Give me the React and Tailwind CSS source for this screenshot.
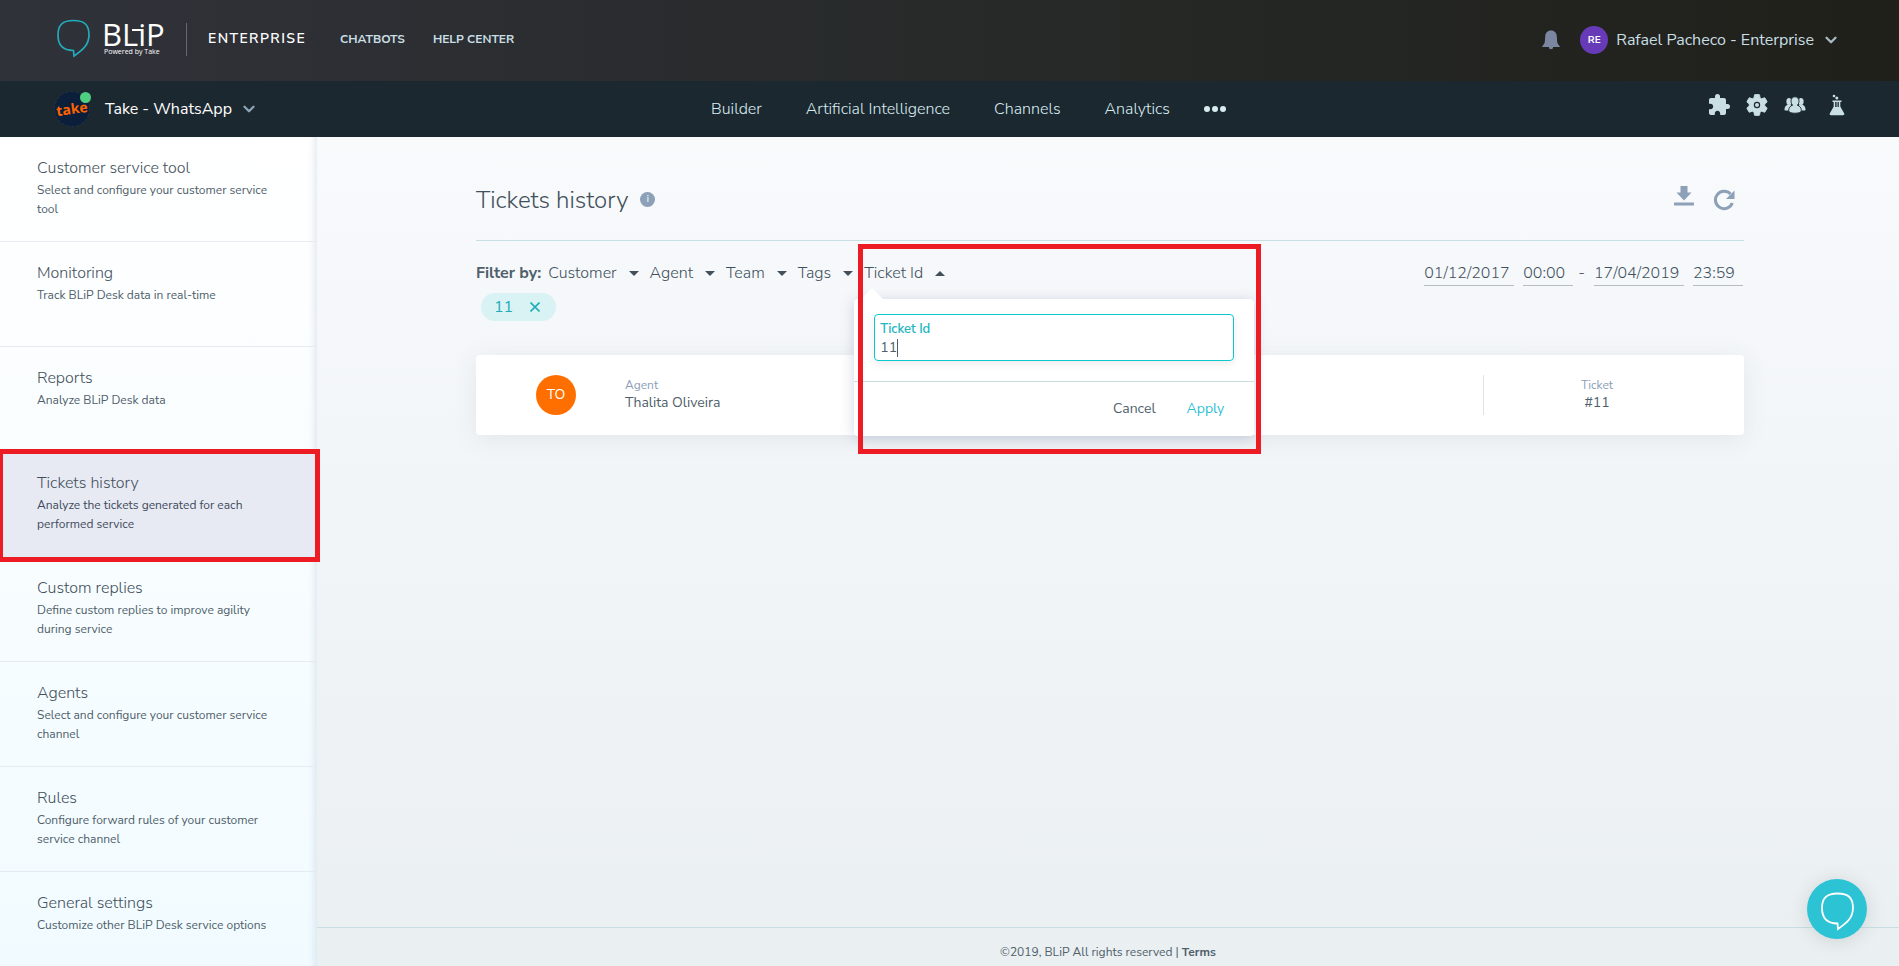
import { FiChevronDown } from "react-icons/fi";
import { MdExtension } from "react-icons/md";

const sections = [
  ["Customer service tool", "Select and configure your customer service tool"],
  ["Monitoring", "Track BLiP Desk data in real-time"],
  ["Reports", "Analyze BLiP Desk data"],
  ["Tickets history", "Analyze the tickets generated for each performed service"],
  ["Custom replies", "Define custom replies to improve agility during service"],
  ["Agents", "Select and configure your customer service channel"],
  ["Rules", "Configure forward rules of your customer service channel"],
  ["General settings", "Customize other BLiP Desk service options"],
];

const bubblePath =
  "M17 1.500C6 1.500 1.500 6 1.500 16c0 10.500 5 15.500 15.500 15.500l.5 5.500C26 31 32.500 26 32.500 16 32.500 6 28 1.500 17 1.500z";

function Bubble({ className, strokeWidth }) {
  return (
    <svg viewBox="0 0 34 40" className={className} fill="none" stroke="currentColor" strokeWidth={strokeWidth} strokeLinejoin="miter">
      <path d={bubblePath} />
    </svg>
  );
}

function Wordmark() {
  return (
    <span className="relative block w-[64px] font-['Open_Sans',sans-serif] text-white">
      <span className="-ml-0.5 block text-[31px] leading-[26px]">BLiP</span>
      <span className="block text-[7px] leading-[10px] whitespace-nowrap">Powered by Take</span>
      <span className="absolute left-7 top-2 h-0.5 w-2.5 bg-white" />
    </span>
  );
}

function BotLogo() {
  return (
    <span className="relative block size-9">
      <svg viewBox="0 0 36 36" className="size-9" role="img" aria-label="take">
        <circle cx="18" cy="18" r="17.500" fill="#0c1f3a" stroke="#2c3d52" strokeWidth="0.6" strokeDasharray="3 2" />
        <text x="18" y="23" fontSize="14" fontWeight="700" fill="#ff6400" fontFamily='"Open Sans", sans-serif' transform="rotate(-8 18 18)" textAnchor="middle">
          take
        </text>
      </svg>
      <span className="absolute -right-px top-px size-[11px] rounded-full bg-[#4fd080]" />
    </span>
  );
}

function BellIcon() {
  return (
    <svg viewBox="0 0 18 20" className="h-5 w-[18px]" fill="currentColor">
      <path d="M9 .5C5.300.5 3.400 3 3.200 6.200L2.900 11c-.1 2-1 3.600-2.700 5.200v.8h6.600a2.200 2.200 0 0 0 4.400 0h6.600v-.8c-1.700-1.600-2.600-3.200-2.700-5.200l-.3-4.800C14.600 3 12.700.5 9 .5z" />
    </svg>
  );
}

function GearIcon() {
  return (
    <svg viewBox="0 0 24 24" className="size-[26px]" fill="currentColor">
      <path d="M19.140 12.940c.04-.3.06-.61.06-.94 0-.32-.02-.64-.07-.94l2.030-1.580c.18-.14.23-.41.12-.61l-1.920-3.320c-.12-.22-.37-.29-.59-.22l-2.390.96c-.5-.38-1.030-.7-1.620-.94l-.36-2.540c-.04-.24-.24-.41-.48-.41h-3.840c-.24 0-.43.17-.47.41l-.36 2.540c-.59.24-1.130.57-1.620.94l-2.390-.96c-.22-.08-.47 0-.59.22L2.740 8.870c-.12.21-.08.47.12.61l2.030 1.580c-.05.3-.09.63-.09.94s.02.64.07.94l-2.030 1.580c-.18.14-.23.41-.12.61l1.920 3.320c.12.22.37.29.59.22l2.390-.96c.5.38 1.030.7 1.620.94l.36 2.540c.05.24.24.41.48.41h3.840c.24 0 .44-.17.47-.41l.36-2.540c.59-.24 1.130-.56 1.620-.94l2.390.96c.22.08.47 0 .59-.22l1.920-3.320c.12-.22.07-.47-.12-.61l-2.010-1.580z" stroke="currentColor" strokeWidth="0.8" />
      <circle cx="12" cy="12" r="2.400" fill="none" stroke="#1c2830" strokeWidth="1.100" />
    </svg>
  );
}

function PeopleIcon() {
  return (
    <svg viewBox="0 0 22 18" className="h-[18px] w-[22px]" fill="currentColor">
      <ellipse cx="5" cy="5.500" rx="2.600" ry="3.500" />
      <ellipse cx="17" cy="5.500" rx="2.600" ry="3.500" />
      <path d="M.5 13.500C.5 10.500 2 9.500 4 8.500h3v6H1.500c-.7 0-1-.4-1-1zM21.500 13.500c0-3-1.500-4-3.500-5h-3v6h5.500c.7 0 1-.4 1-1z" />
      <path
        d="M11 .8c2.500 0 4 1.800 4 4.200 0 1.900-.7 3.300-1.700 4.200 2.600.8 4 2.500 4 5.300 0 1.900-3 2.700-6.300 2.700s-6.300-.8-6.300-2.700c0-2.800 1.400-4.500 4-5.300C7.700 8.300 7 6.900 7 5 7 2.600 8.500.8 11 .8z"
        stroke="#1c2830"
        strokeWidth="0.9"
      />
    </svg>
  );
}

function FlaskIcon() {
  return (
    <svg viewBox="0 0 16 22" className="h-[22px] w-4" fill="currentColor">
      <circle cx="5" cy="2" r="1.300" />
      <circle cx="7.800" cy="4" r="1.500" />
      <path d="M3.500 6.500h9V8h-1.200v4.500l3.800 6.800c.6 1.100 0 2-1.200 2H2.100c-1.200 0-1.800-.9-1.200-2l3.800-6.800V8H3.500z" />
      <path d="M6.200 8h3.600v5H6.200z" fill="#1c2830" />
      <path d="M7.600 8h.9v5h-.9z" />
    </svg>
  );
}

function DownloadIcon() {
  return (
    <svg viewBox="0 0 22 22" className="size-[22px]" fill="currentColor">
      <path d="M7.500 1h7v6.500h4L11 15.500 3.500 7.500h4z" />
      <rect x="1" y="17.500" width="20" height="3" rx="0.5" />
    </svg>
  );
}

function RefreshIcon() {
  return (
    <svg viewBox="0 0 22 22" className="size-[22px]" fill="none" stroke="currentColor" strokeWidth="3">
      <path d="M19.300 14A8.700 8.700 0 1 1 17.500 5" />
      <path d="M21.500 1.500v8.500h-8.500z" fill="currentColor" stroke="none" />
    </svg>
  );
}

function Caret({ up }) {
  return (
    <svg viewBox="0 0 10 5" className={up ? "h-[5px] w-[10px] rotate-180" : "h-[5px] w-[10px]"} fill="currentColor">
      <path d="M0 0h10L5 5z" />
    </svg>
  );
}

function FilterButton({ children, up }) {
  return (
    <button type="button" aria-expanded={!!up} className="flex items-center gap-3 font-light text-[#42505c]">
      {children}
      <Caret up={up} />
    </button>
  );
}

function TicketPopup() {
  return (
    <form className="absolute -left-[10px] top-[38px] z-10 w-[400px] rounded-sm bg-white shadow-[0_2px_14px_rgba(80,100,150,0.25)]">
      <svg viewBox="0 0 22 11" className="absolute -top-[11px] left-[7px] h-[11px] w-[22px]" fill="#fff">
        <path d="M11 0l11 11H0z" />
      </svg>
      <div className="border-b border-[#c7dfe3] px-5 pb-5 pt-[15px]">
        <div className="h-[47px] rounded border border-[#0cc8cc] px-[5px] pt-1 shadow-[0_3px_10px_rgba(0,0,0,0.08)]">
          <label htmlFor="ticket-id" className="block text-[13px] leading-5 font-semibold text-[#21b5bf]">
            Ticket Id
          </label>
          <div className="flex items-center">
            <input id="ticket-id" defaultValue="11" className="field-sizing-content h-[18px] text-sm leading-[18px] caret-transparent outline-none" />
            <span className="h-[18px] w-px bg-[#505f6b]" />
          </div>
        </div>
      </div>
      <div className="flex h-[54px] items-center justify-end gap-[31px] pr-[30px] text-sm">
        <button type="button">Cancel</button>
        <button type="submit" className="text-[#2fbfd6]">Apply</button>
      </div>
      <div className="pointer-events-none absolute -right-[7px] -top-[55px] h-[210px] w-[403px] border-5 border-[#ed1c24]" />
    </form>
  );
}

function DateField({ label, value, wide }) {
  return (
    <input
      aria-label={label}
      defaultValue={value}
      className={
        (wide ? "w-[90px]" : "w-[50px]") + " h-[26px] border-b border-[#b5bcc2] bg-transparent font-light text-[#42505c] outline-none"
      }
    />
  );
}

export default function App() {
  return (
    <div className="flex h-screen flex-col overflow-hidden font-['Nunito_Sans',Lato,sans-serif] text-base text-[#505f6b]">
      <header className="flex h-[81px] shrink-0 items-center bg-linear-to-r from-[#30323a] via-[#272a29] to-[#20201a] pb-[3px] pl-14 pr-[59px] text-[#c9dfe4]">
        <a href="#home" className="flex items-center gap-[13px]">
          <Bubble className="h-10 w-[35px] text-[#22acbd]" strokeWidth="1.700" />
          <Wordmark />
        </a>
        <span className="ml-[18px] h-[33px] w-px bg-[#5f6c73]" />
        <span className="ml-[21px] text-sm font-semibold tracking-widest text-white">ENTERPRISE</span>
        <nav className="ml-[34px] flex gap-7 text-xs font-bold">
          <a href="#chatbots">CHATBOTS</a>
          <a href="#help">HELP CENTER</a>
        </nav>
        <div className="ml-auto flex items-center pt-0.5">
          <button type="button" aria-label="Notifications" className="text-[#7b87a0]">
            <BellIcon />
          </button>
          <button type="button" className="ml-5 flex items-center gap-2">
            <span className="flex size-7 items-center justify-center rounded-full bg-[#673ab7] text-[10px] font-bold text-white">RE</span>
            <span>Rafael Pacheco - Enterprise</span>
            <FiChevronDown className="size-[18px] text-[#a9bac6]" strokeWidth={3} />
          </button>
        </div>
      </header>

      <div className="grid h-14 shrink-0 grid-cols-[1fr_auto_1fr] items-center bg-[#1c2830] pl-[54px] pr-[54px] text-[#c9dfe4]">
        <button type="button" className="flex items-center text-white">
          <BotLogo />
          <span className="ml-[15px]">Take - WhatsApp</span>
          <FiChevronDown className="ml-2 size-[18px] text-[#8fa5b8]" strokeWidth={3} />
        </button>
        <nav className="flex items-center gap-11 pl-[38px] font-light text-[#d8ecf0]">
          <a href="#builder">Builder</a>
          <a href="#ai">Artificial Intelligence</a>
          <a href="#channels">Channels</a>
          <a href="#analytics">Analytics</a>
          <button type="button" aria-label="More" className="-ml-2.5">
            <svg viewBox="0 0 22 6" className="h-1.5 w-[22px]" fill="currentColor">
              <circle cx="3" cy="3" r="3" />
              <circle cx="11" cy="3" r="3" />
              <circle cx="19" cy="3" r="3" />
            </svg>
          </button>
        </nav>
        <div className="flex items-center justify-end pb-2">
          <button type="button" aria-label="Extensions"><MdExtension className="size-6" /></button>
          <button type="button" aria-label="Settings" className="ml-[13px]"><GearIcon /></button>
          <button type="button" aria-label="Team" className="ml-[14px]"><PeopleIcon /></button>
          <button type="button" aria-label="Experiments" className="ml-[23px]"><FlaskIcon /></button>
        </div>
      </div>

      <div className="flex min-h-0 flex-1">
        <aside className="w-[317px] shrink-0 bg-linear-to-b from-white to-[#f1fbff] shadow-[inset_-7px_0_6px_-4px_rgba(190,200,220,0.4)]">
          {sections.map(([title, text], i) => (
            <a
              key={title}
              href={"#section-" + i}
              className={
                "relative block h-[105px] border-b border-[#e6ebf2] pl-[37px] pr-11 pt-5 " +
                (title === "Tickets history" ? "bg-[#e8eaf3] text-[#404a5c]" : "")
              }
            >
              <span className="block text-base leading-[22px] font-light text-[#42505c]">{title}</span>
              <span className="mt-0.5 block text-xs leading-[19px]">{text}</span>
              {title === "Tickets history" && (
                <span className="pointer-events-none absolute -left-0.5 -right-[3px] -top-[3px] z-10 h-[113px] border-5 border-[#ed1c24]" />
              )}
            </a>
          ))}
        </aside>

        <div className="flex min-w-0 flex-1 flex-col bg-linear-to-b from-[#f8fafc] to-[#eaeff2]">
          <main className="flex-1 pl-[159px] pr-[155px]">
            <div className="flex h-[104px] items-center border-b border-[#c7dfe3] pt-[22px]">
              <h1 className="text-2xl font-light text-[#42505c]">Tickets history</h1>
              <button type="button" aria-label="About this page" className="ml-3 flex size-[15px] items-center justify-center rounded-full bg-[#8ca0b8] text-[10px] font-bold text-[#dce4ec]">
                i
              </button>
              <div className="ml-auto flex gap-[18px] pr-[9px] text-[#8ca0b8]">
                <button type="button" aria-label="Download" className="pb-2"><DownloadIcon /></button>
                <button type="button" aria-label="Refresh"><RefreshIcon /></button>
              </div>
            </div>

            <div className="flex items-center justify-between pt-[19px]">
              <div className="flex h-[26px] items-center gap-[11px]">
                <span className="-mr-1 font-bold">Filter by:</span>
                <FilterButton>Customer</FilterButton>
                <FilterButton>Agent</FilterButton>
                <FilterButton>Team</FilterButton>
                <FilterButton>Tags</FilterButton>
                <div className="relative">
                  <FilterButton up>Ticket Id</FilterButton>
                  <TicketPopup />
                </div>
              </div>
              <div className="flex items-center gap-[9px] pr-px">
                <DateField label="Start date" value="01/12/2017" wide />
                <DateField label="Start time" value="00:00" />
                <span className="-ml-1 font-light text-[#42505c]">-</span>
                <DateField label="End date" value="17/04/2019" wide />
                <DateField label="End time" value="23:59" />
              </div>
            </div>

            <div className="ml-[5px] mt-[7px] flex h-7 w-[75px] items-center justify-between rounded-full bg-[#d9f2f4] pl-[13px] pr-4 text-[#21adb8]">
              <span>11</span>
              <button type="button" aria-label="Remove filter 11">
                <svg viewBox="0 0 10 10" className="size-2.5" stroke="currentColor" strokeWidth="1.600">
                  <path d="M.5.5l9 9M9.500.5l-9 9" />
                </svg>
              </button>
            </div>

            <article className="mt-[34px] flex h-20 items-center rounded-sm bg-white pl-[60px] pr-[34px] shadow-[0_4px_24px_rgba(80,100,110,0.1)]">
              <span className="flex size-10 items-center justify-center rounded-full bg-[#ff6f00] text-sm text-white">TO</span>
              <div className="ml-[49px] pb-[3px]">
                <div className="text-xs leading-[18px] text-[#8ca0b8]">Agent</div>
                <div className="text-sm leading-[18px]">Thalita Oliveira</div>
              </div>
              <div className="ml-auto flex h-10 w-[227px] flex-col items-center justify-center border-l border-[#dfe3e8] pb-[3px]">
                <div className="text-xs leading-[18px] text-[#8ca0b8]">Ticket</div>
                <div className="text-sm leading-[18px]">#11</div>
              </div>
            </article>
          </main>

          <footer className="flex h-[39px] items-center justify-center border-t border-[#c7dfe3] pt-2.5 text-xs">
            <span>
              ©2019, BLiP All rights reserved | <a href="#terms" className="font-bold">Terms</a>
            </span>
          </footer>
        </div>
      </div>

      <button type="button" aria-label="Open chat" className="fixed bottom-[27px] right-8 flex size-[60px] items-center justify-center rounded-full bg-[#2cc3d5] pt-1.5 text-white shadow-[0_2px_20px_rgba(0,0,0,0.12)]">
        <Bubble className="h-10 w-[35px]" strokeWidth="1.800" />
      </button>
    </div>
  );
}
